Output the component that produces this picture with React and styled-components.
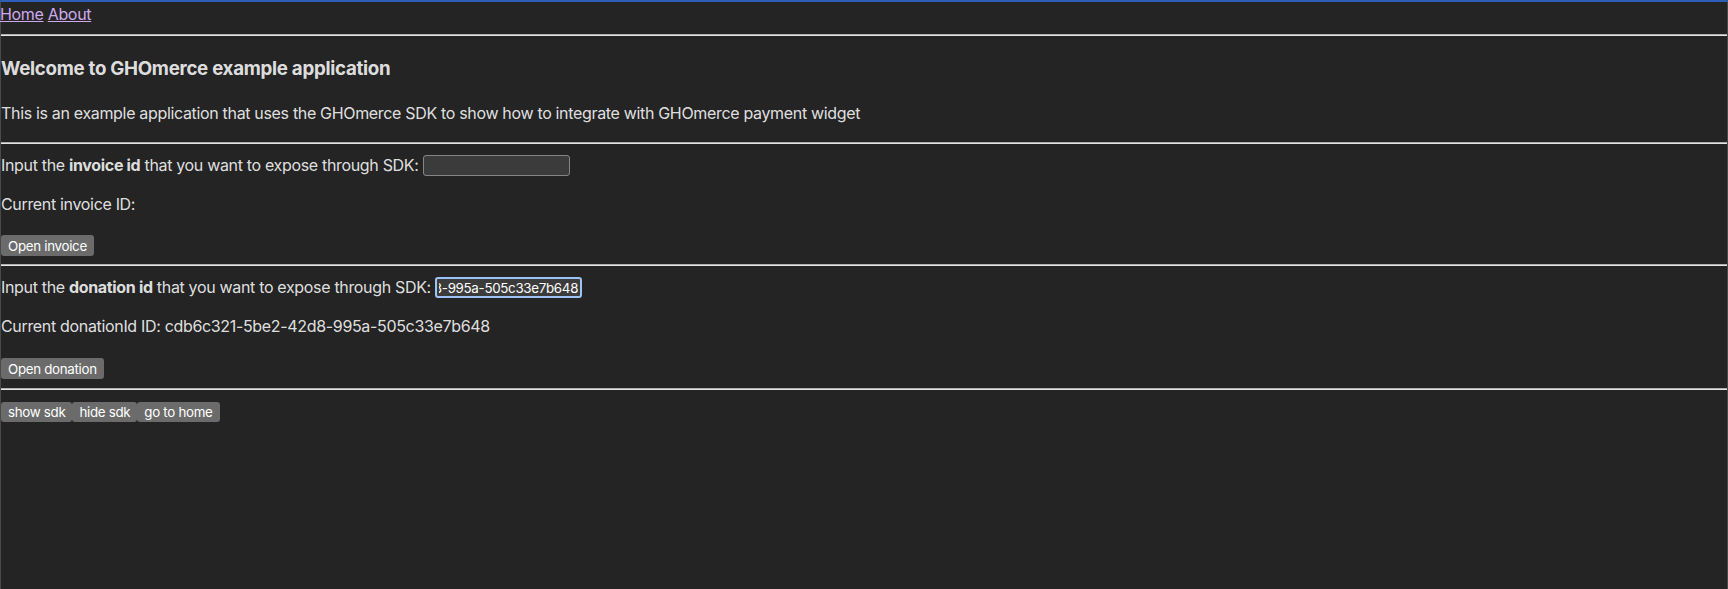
import React, { useEffect, useRef } from "react";
import styled, { createGlobalStyle } from "styled-components";

const GlobalStyle = createGlobalStyle`
  html, body {
    margin: 0;
    padding: 0;
    background: #242424;
  }
  body {
    font-family: Inter, "Noto Sans", sans-serif;
    color: rgba(255, 255, 255, 0.87);
  }
`;

const Page = styled.div`
  min-height: 589px;
  box-sizing: border-box;
  border-top: 2px solid #2c5fb5;
  border-left: 1px solid #4a4a4a;
  border-right: 1px solid #4a4a4a;
  display: flex;
  flex-direction: column;
  font-size: 16px;
  line-height: 19px;
  letter-spacing: -0.33px;
`;

const Nav = styled.nav`
  margin-top: 3px;
  height: 19px;
  margin-left: -1px;
`;

const NavLink = styled.a`
  color: #cfa9ee;
  text-decoration: underline;
  cursor: pointer;
`;

const Divider = styled.hr`
  margin: ${(p) => p.$top}px 0 0;
  height: 0;
  border: 0;
  border-top: 1px solid #b0b0b0;
  border-bottom: 1px solid #e4e4e4;
`;

const Heading = styled.h3`
  margin: 21px 0 0;
  font-size: 18.72px;
  line-height: 23px;
  font-weight: 700;
  letter-spacing: -0.28px;
`;

const Text = styled.p`
  margin: ${(p) => p.$top}px 0 0;
  line-height: 19px;
`;

const FieldRow = styled.p`
  margin: 11px 0 0;
  height: 21px;
  line-height: 21px;
  white-space: pre;
`;

const IdInput = styled.input`
  box-sizing: border-box;
  width: 147px;
  height: 21px;
  vertical-align: top;
  padding: 1px 2px;
  background: #3b3b3b;
  color: #ffffff;
  font-family: Inter, "Noto Sans", sans-serif;
  font-size: 13.33px;
  letter-spacing: -0.3px;
  border: ${(p) => (p.$focused ? "2px solid #9cc3f3" : "1px solid #858585")};
  border-radius: 3px;
  outline: none;
`;

const ActionButton = styled.button`
  box-sizing: border-box;
  height: ${(p) => p.$height || 21}px;
  padding: 0 7px;
  border: none;
  border-radius: 3px;
  background: #6b6b6b;
  color: #ffffff;
  font-family: Inter, "Noto Sans", sans-serif;
  font-size: 13.33px;
  letter-spacing: -0.3px;
  cursor: pointer;
`;

const ButtonSlot = styled.div`
  margin-top: ${(p) => p.$top}px;
  display: flex;
`;

const DONATION_ID = "cdb6c321-5be2-42d8-995a-505c33e7b648";

const FocusedInput = ({ value }) => {
  const ref = useRef(null);
  useEffect(() => {
    if (ref.current) ref.current.scrollLeft = ref.current.scrollWidth;
  }, []);
  return <IdInput ref={ref} $focused defaultValue={value} />;
};

const App = () => {
  return (
    <Page>
      <GlobalStyle />
      <Nav>
        <NavLink>Home</NavLink> <NavLink>About</NavLink>
      </Nav>
      <Divider $top={10} />

      <Heading>Welcome to GHOmerce example application</Heading>
      <Text $top={24}>
        This is an example application that uses the GHOmerce SDK to show how to integrate with
        GHOmerce payment widget
      </Text>
      <Divider $top={19} />

      <FieldRow>
        Input the <b>invoice id</b> that you want to expose through SDK: <IdInput />
      </FieldRow>
      <Text $top={19}>Current invoice ID: </Text>
      <ButtonSlot $top={21}>
        <ActionButton>Open invoice</ActionButton>
      </ButtonSlot>
      <Divider $top={8} />

      <FieldRow>
        Input the <b>donation id</b> that you want to expose through SDK: <FocusedInput value={DONATION_ID} />
      </FieldRow>
      <Text $top={19}>Current donationId ID: {DONATION_ID}</Text>
      <ButtonSlot $top={22}>
        <ActionButton>Open donation</ActionButton>
      </ButtonSlot>
      <Divider $top={9} />

      <ButtonSlot $top={12}>
        <ActionButton $height={20}>show sdk</ActionButton>
        <ActionButton $height={20}>hide sdk</ActionButton>
        <ActionButton $height={20}>go to home</ActionButton>
      </ButtonSlot>
    </Page>
  );
};

export default App;
